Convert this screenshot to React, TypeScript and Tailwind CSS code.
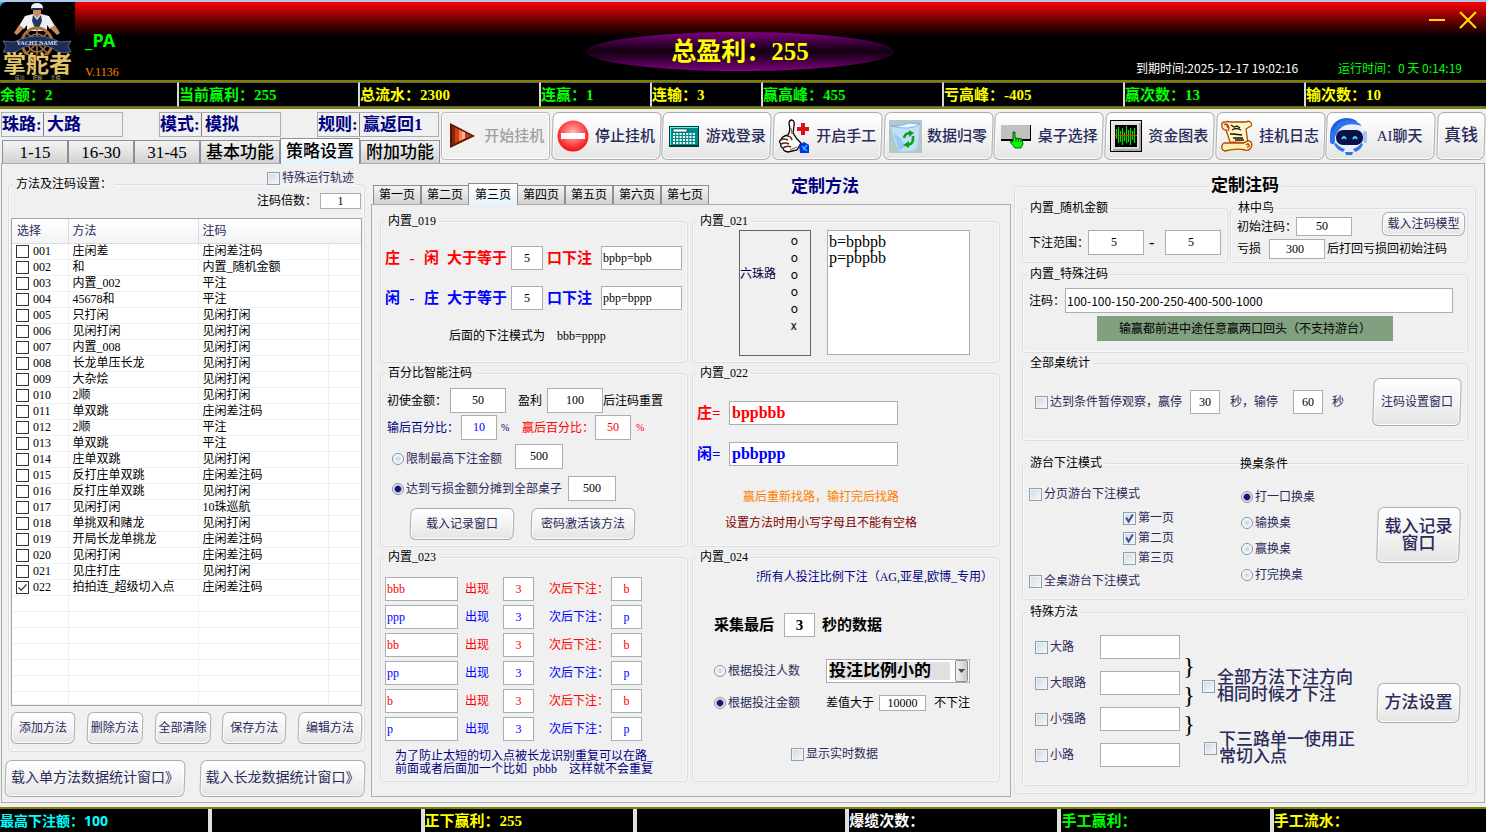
import type { ReactNode } from 'react'
import clsx from 'clsx'

type MethodRow = { id: string; method: string; stake: string; checked?: boolean }

const methods: MethodRow[] = [
  { id: '001', method: '庄闲差', stake: '庄闲差注码' },
  { id: '002', method: '和', stake: '内置_随机金额' },
  { id: '003', method: '内置_002', stake: '平注' },
  { id: '004', method: '45678和', stake: '平注' },
  { id: '005', method: '只打闲', stake: '见闲打闲' },
  { id: '006', method: '见闲打闲', stake: '见闲打闲' },
  { id: '007', method: '内置_008', stake: '见闲打闲' },
  { id: '008', method: '长龙单压长龙', stake: '见闲打闲' },
  { id: '009', method: '大杂烩', stake: '见闲打闲' },
  { id: '010', method: '2顺', stake: '见闲打闲' },
  { id: '011', method: '单双跳', stake: '庄闲差注码' },
  { id: '012', method: '2顺', stake: '平注' },
  { id: '013', method: '单双跳', stake: '平注' },
  { id: '014', method: '庄单双跳', stake: '见闲打闲' },
  { id: '015', method: '反打庄单双跳', stake: '庄闲差注码' },
  { id: '016', method: '反打庄单双跳', stake: '见闲打闲' },
  { id: '017', method: '见闲打闲', stake: '10珠巡航' },
  { id: '018', method: '单挑双和赌龙', stake: '见闲打闲' },
  { id: '019', method: '开局长龙单挑龙', stake: '庄闲差注码' },
  { id: '020', method: '见闲打闲', stake: '庄闲差注码' },
  { id: '021', method: '见庄打庄', stake: '见闲打闲' },
  { id: '022', method: '拍拍连_超级切入点', stake: '庄闲差注码', checked: true },
]

const stats = [
  { text: '余额：2', color: 'text-[#00ff00]' },
  { text: '当前赢利：255', color: 'text-[#00ff00]' },
  { text: '总流水：2300', color: 'text-[#ffff00]' },
  { text: '连赢：1', color: 'text-[#00ff00]' },
  { text: '连输：3', color: 'text-[#ffff00]' },
  { text: '赢高峰：455', color: 'text-[#00ff00]' },
  { text: '亏高峰：-405', color: 'text-[#ffff00]' },
  { text: '赢次数：13', color: 'text-[#00ff00]' },
  { text: '输次数：10', color: 'text-[#ffff00]' },
]

const footer = [
  { text: '最高下注额：100', color: "font-['Noto_Sans','Noto_Sans_CJK_SC',sans-serif] text-sm text-[#00ffff]" },
  { text: '', color: '' },
  { text: '正下赢利：255', color: 'text-[#ffff00]' },
  { text: '', color: '' },
  { text: '爆缆次数：', color: 'text-white' },
  { text: '手工赢利：', color: 'text-[#00ff00]' },
  { text: '手工流水：', color: 'text-[#ffff00]' },
]

const triggers = [
  { seq: 'bbb', next: 'b', color: 'text-[#ff0000]' },
  { seq: 'ppp', next: 'p', color: 'text-[#0000ff]' },
  { seq: 'bb', next: 'b', color: 'text-[#ff0000]' },
  { seq: 'pp', next: 'p', color: 'text-[#0000ff]' },
  { seq: 'b', next: 'b', color: 'text-[#ff0000]' },
  { seq: 'p', next: 'p', color: 'text-[#0000ff]' },
]

function Group({ title, className, children }: { title: string; className?: string; children: ReactNode }) {
  return (
    <fieldset className={clsx('relative min-w-0 rounded border border-[#d5dfe5] ring-1 ring-white/60 ring-inset', className)}>
      <legend className="ml-1 bg-[#f0f0f0] px-[3px] leading-[14px]">{title}</legend>
      {children}
    </fieldset>
  )
}

function Field({ value, label, className }: { value: string; label?: string; className?: string }) {
  return (
    <input
      defaultValue={value}
      aria-label={label}
      className={clsx('min-w-0 shrink-0 border border-[#abadb3] bg-white outline-none', className)}
    />
  )
}

function Check({ label, checked, className }: { label: ReactNode; checked?: boolean; className?: string }) {
  return (
    <label className={clsx('flex items-center gap-[2px] whitespace-nowrap text-[#2b2b5a]', className)}>
      <span className="relative block h-[13px] w-[13px] shrink-0">
        <input
          type="checkbox"
          defaultChecked={checked}
          className="peer block h-[13px] w-[13px] appearance-none border border-[#8e9fb0] bg-linear-to-br from-[#cfd9e2] to-[#f6f9fc] shadow-[inset_0_0_0_1px_#f0f4f7]"
        />
        <svg viewBox="0 0 13 13" className="pointer-events-none absolute inset-0 hidden peer-checked:block" fill="none" stroke="#3b4a96" strokeWidth="2">
          <path d="M3.2 5.5 5.6 9.6 9.8 2.6" />
        </svg>
      </span>
      <span>{label}</span>
    </label>
  )
}

function Radio({ label, name, checked, className }: { label: string; name: string; checked?: boolean; className?: string }) {
  return (
    <label className={clsx('flex items-center gap-[2px] whitespace-nowrap text-[#2b2b5a]', className)}>
      <input
        type="radio"
        name={name}
        defaultChecked={checked}
        className="h-3 w-3 shrink-0 appearance-none rounded-full border border-[#8e8f8f] bg-radial from-[#b8d8ee] to-white to-70% checked:from-[#14146e] checked:from-35% checked:to-[#eef3f8] checked:to-60%"
      />
      <span>{label}</span>
    </label>
  )
}

function Btn({ className, disabled, children }: { className?: string; disabled?: boolean; children: ReactNode }) {
  return (
    <button
      disabled={disabled}
      className={clsx(
        'relative isolate flex items-center justify-center whitespace-nowrap before:absolute before:inset-0 before:-z-10 before:border before:shadow-[inset_0_0_0_1px_#fff]',
        disabled
          ? 'text-[#a0a0a0] before:rounded-sm before:border-[#b8b8b8] before:bg-[#f0f0f0]'
          : 'text-[#2b2b5a] before:-skew-x-2 before:rounded-md before:border-[#acacac] before:bg-linear-to-b before:from-white before:via-[#f3f3f3] before:to-[#e4e4e4]',
        className,
      )}
    >
      {children}
    </button>
  )
}

function Logo() {
  return (
    <div className="flex h-[78px] w-[75px] shrink-0 flex-col items-center bg-black">
      <svg width="75" height="53" viewBox="0 0 75 53">
        <path d="M0 0h6Q1 1 0 5z" fill="#4aa6e0" />
        <path d="M31 5q1-4 6-4t6 4l-1 3H32z" fill="#f2f2f2" />
        <path d="M32 6h10v2H32z" fill="#1b2b55" />
        <path d="M33 8h8v4q-1 4-4 4t-4-4z" fill="#c98a5b" />
        <path d="M25 14l8-2 4 4 4-4 8 2 6 10-5 3-3-4v6H27v-6l-3 4-5-3z" fill="#eef0f4" />
        <path d="M33 13l4 5 4-5 1 6-3 7h-4l-3-7z" fill="#24375f" />
        <path d="M19 23l-5 8 3 2 7-7zM55 23l5 8-3 2-7-7z" fill="#c98a5b" />
        <g fill="none" stroke="#a8703a">
          <circle cx="37" cy="41" r="15" strokeWidth="3" />
          <circle cx="37" cy="41" r="9" strokeWidth="1.5" />
          <path d="M37 25v29M20 41h34M26 30l22 22M48 30 26 52" strokeWidth="1.6" />
        </g>
        <path d="M3 39l10 1q4-1 8-3 16-6 32 0 4 2 8 3l10-1-3 5 3 6-11 1-8-5q-15-7-30 0l-8 5-11-1 3-6z" fill="#1d2d57" stroke="#73809c" strokeWidth="0.7" />
        <text x="37" y="43" fontSize="6" fontWeight="bold" fill="#dfe4ee" textAnchor="middle">YACHT NAME</text>
      </svg>
      <div className="-mt-px text-[23px] leading-[21px] font-bold text-[#e3c56b]">掌舵者</div>
      <div className="flex gap-2 text-[5px] leading-[5px] text-[#b8b08a]"><span>成功</span><span>把握</span><span>幸福</span></div>
    </div>
  )
}

function PlayIcon() {
  return (
    <svg width="28" height="28" viewBox="0 0 28 28">
      <path d="M2 1v25L27 14z" fill="#5c1400" />
      <path d="M4 4v19l3-1V5z" fill="#7a2a10" />
      <path d="M7 5.500v16l4-2V7.500z" fill="#d2400f" />
      <path d="M11 7.500v12l3-1.500V9z" fill="#ff7a50" />
      <path d="M14 9v9l3-1.500V10.500z" fill="#ffb49a" />
      <path d="M17 10.500v6l7-2.500z" fill="#b24020" />
    </svg>
  )
}

function StopIcon() {
  return (
    <svg width="32" height="32" viewBox="0 0 32 32">
      <defs>
        <radialGradient id="stop" cx="0.5" cy="0.4" r="0.65">
          <stop offset="0" stopColor="#ffc0c0" />
          <stop offset="0.5" stopColor="#ff5a5a" />
          <stop offset="1" stopColor="#f00000" />
        </radialGradient>
      </defs>
      <circle cx="16" cy="16" r="15.500" fill="url(#stop)" />
      <rect x="4" y="13" width="24" height="6" fill="#fff" />
    </svg>
  )
}

function CalcIcon() {
  return (
    <svg width="32" height="32" viewBox="0 0 32 32">
      <path d="M1 6h30v21H1z" fill="#003838" />
      <path d="M2 7h28v18H2z" fill="#008a8a" />
      <path d="M2 7h28v1H3v17H2z" fill="#4ff" />
      <path d="M5 9h14v3H5z" fill="#e8ffff" stroke="#003838" strokeWidth="0.6" />
      {[14, 17, 20, 23].map((y) => (
        <path key={y} d={`M5 ${y}h22`} stroke="#fff" strokeWidth="2" strokeDasharray="2 1.300" />
      ))}
    </svg>
  )
}

function ThumbIcon() {
  return (
    <svg width="34" height="34" viewBox="0 0 34 34">
      <path d="M11 16q3-5 1-11 0-4 3-4 3 1 2 6l-1 7 4 6 4 4-4 7-9 2q-5-1-5-4-3-1-2-4-3-3 0-4 1-4 7-5z" fill="#fff" stroke="#000" strokeWidth="1.300" />
      <path d="M3 21q4-2 8 0M4 25q4-2 8 0M6 29q4-3 8-1M10 17q4 0 5 4" fill="none" stroke="#5c2a08" strokeWidth="1.600" />
      <path d="M13 31l7-3M14 9l1 6" stroke="#a86a3a" strokeWidth="1.200" />
      <path d="M22 26l5-3 5 3v8h-9z" fill="#0030e0" />
      <path d="M25 27l5 5M30 26l-4 5" stroke="#20c8ff" strokeWidth="1.400" />
      <path d="M24 4h4v4h4v4h-4v4h-4v-4h-4V8h4z" fill="#e01010" />
    </svg>
  )
}

function RecycleIcon() {
  return (
    <svg width="33" height="33" viewBox="0 0 33 33">
      <rect width="33" height="33" fill="#b4c8c8" />
      <path d="M2 6q8 1 18-3l11 1-3 24q-7 5-18 3-4-6-8-25z" fill="#bfe0fa" />
      <path d="M2 6q8 1 18-3l11 1q-10 7-29 2z" fill="#eaf6ff" stroke="#5fa9e6" strokeWidth="0.800" />
      <path d="M5 14q9 4 11 13l-6 3z" fill="#6db4ee" opacity="0.500" />
      <g fill="none" stroke="#12a012" strokeWidth="2.600">
        <path d="M15 18q1-5 6-5M24 16q1 8-5 9" />
      </g>
      <path d="M20 10l5 3-5 4zM20 21v7l-6-3z" fill="#12a012" />
    </svg>
  )
}

function TableIcon() {
  return (
    <svg width="32" height="32" viewBox="0 0 32 32">
      <path d="M1 5h30v15H1z" fill="#c0c0c0" />
      <path d="M1 19h29V5h1v16H1z" fill="#000" />
      <path d="M13 12h2v6l7 1 1 5-2 4h-6l-5-6 1-1 2 1z" fill="#00ff00" stroke="#003000" strokeWidth="0.800" />
      <path d="M16 18v4M18.500 18.500v3.500M21 19v3" stroke="#003000" strokeWidth="0.700" />
    </svg>
  )
}

function ChartIcon() {
  return (
    <svg width="32" height="32" viewBox="0 0 32 32">
      <path d="M0 0h32v32H0z" fill="#000" />
      <path d="M1 1h30v30H1z" fill="#e8e8e8" />
      <path d="M3 3h28v28H3z" fill="#a8a8a8" />
      <path d="M3 3h26v26H3z" fill="#dcdcdc" />
      <path d="M5 5h22v22H5z" fill="#000" />
      <path
        d="M6.500 9v10M8.500 7v16M10.500 11v11M12.500 8v17M14.500 12v9M16.500 6v17M18.500 10v12M20.500 8v17M22.500 11v9M24.500 8v15"
        stroke="#00e000"
        strokeWidth="1.200"
      />
      <path d="M5 15.500h22" stroke="#ff2020" strokeWidth="1" />
    </svg>
  )
}

function ScrollIcon() {
  return (
    <svg width="32" height="32" viewBox="0 0 32 32" strokeWidth="1.300" stroke="#b04a00">
      <path d="M4 2q-4 0-3 4 0 4 4 4l4 12 18 1-2-14 3-2q4-1 2-4-2-3-5-1H9Q7 1 4 2z" fill="#fff6c8" />
      <path d="M3 23h20q4-4 7-1 2 4-1 7-2 2-5 1-8-2-20 1-4-1-3-5 0-2 2-3z" fill="#fff0b0" />
      <path d="M25 25q2-2 3 0t-2 2M5 6q2 0 2 2" fill="none" />
      <path d="M3 5q4-3 5 3l-1 3" fill="none" stroke="#e02020" />
      <path d="M10 5l3 2 3-1 3 2M11 10q4-3 9 0M9 14h5M12 14l9 1M12 18h10M14 20h9" fill="none" stroke="#201000" />
    </svg>
  )
}

function RobotIcon() {
  return (
    <svg width="38" height="38" viewBox="0 0 38 38">
      <path d="M1 22Q0 6 12 2q8-3 16 2l-3 4Q12 4 7 14L5 27z" fill="#1f5fe0" />
      <ellipse cx="20" cy="20" rx="16" ry="15" fill="#e6effa" />
      <path d="M4 18Q5 5 19 3q9 0 14 6-9-3-16-1T6 20z" fill="#2f74ee" />
      <rect x="1" y="15" width="5" height="12" rx="2.500" fill="#2f74ee" />
      <rect x="34" y="14" width="4" height="12" rx="2" fill="#9fc6f6" />
      <rect x="7" y="13" width="27" height="15" rx="7" fill="#0b1048" />
      <path d="M13 22q2-4 4 0M24 22q2-4 4 0" fill="none" stroke="#3fd8ff" strokeWidth="1.800" />
      <path d="M5 27q3 6 9 8l2-3q-6-2-9-6zM34 27q-2 6-8 8l-2-3q6-2 8-6z" fill="#2f74ee" />
      <path d="M16 35h8l-1 3h-6z" fill="#2f74ee" />
    </svg>
  )
}

const tools: { label: string; icon?: ReactNode; disabled?: boolean }[] = [
  { label: '开始挂机', icon: <PlayIcon />, disabled: true },
  { label: '停止挂机', icon: <StopIcon /> },
  { label: '游戏登录', icon: <CalcIcon /> },
  { label: '开启手工', icon: <ThumbIcon /> },
  { label: '数据归零', icon: <RecycleIcon /> },
  { label: '桌子选择', icon: <TableIcon /> },
  { label: '资金图表', icon: <ChartIcon /> },
  { label: '挂机日志', icon: <ScrollIcon /> },
  { label: 'AI聊天', icon: <RobotIcon /> },
]

function TitleBar() {
  return (
    <header className="relative flex h-[78px] bg-linear-to-b from-[#ff0000] to-black to-50% text-[#00ff00]">
      <Logo />
      <div className="flex flex-col pl-[10px]">
        <div className="mt-7 font-['Noto_Sans','Noto_Sans_CJK_SC',sans-serif] text-lg leading-5 font-bold">_PA</div>
        <div className="mt-[14px] text-[#ff8000]">V.1136</div>
      </div>
      <div className="absolute top-[30px] left-1/2 flex h-[39px] w-[308px] -translate-x-[157px] items-center justify-center rounded-[50%] bg-linear-to-b from-[#800080] via-[#100010] to-[#800080] text-[25px] font-bold text-[#ffff00]">
        总盈利：255
      </div>
      <div className="ml-auto flex flex-col items-end justify-between pr-4 pb-1">
        <div className="flex items-center gap-3 pt-2">
          <button aria-label="最小化" className="block">
            <svg width="18" height="20" viewBox="0 0 18 20" stroke="#ffe000" strokeWidth="2"><path d="M1 10h16" /></svg>
          </button>
          <button aria-label="关闭" className="-mr-2 block">
            <svg width="20" height="20" viewBox="0 0 20 20" stroke="#ffe000" strokeWidth="2"><path d="M2 2l16 16M18 2 2 18" /></svg>
          </button>
        </div>
        <div className="flex font-['Noto_Sans_CJK_SC',sans-serif] leading-4">
          <span className="w-[202px] text-white">到期时间:2025-12-17 19:02:16</span>
          <span className="w-[132px]">运行时间：0 天 0:14:19</span>
        </div>
      </div>
    </header>
  )
}

function InfoBox({ label, value }: { label: string; value: string }) {
  return (
    <div className="flex h-[25px] w-[122px] border border-[#a8aeb4] text-[17px] font-bold whitespace-nowrap text-[#000080]">
      <span className="flex w-[42px] items-center border-r border-[#808080]">{label}</span>
      <span className="flex items-center pl-[3px]">{value}</span>
    </div>
  )
}

function Toolbar() {
  const tabs = ['1-15', '16-30', '31-45', '基本功能', '策略设置', '附加功能']
  return (
    <div className="flex px-[1px] pt-[3px]">
      <div className="flex w-[440px] shrink-0 flex-col justify-between">
        <div className="flex justify-between pr-[2px]">
          <InfoBox label="珠路:" value="大路" />
          <InfoBox label="模式:" value="模拟" />
          <InfoBox label="规则:" value="赢返回1" />
        </div>
        <div role="tablist" className="flex h-[25px] items-end pl-px">
          {tabs.map((tab, i) => (
            <button
              key={tab}
              role="tab"
              aria-selected={i === 4}
              className={clsx(
                'relative border border-[#8c8e94] text-[17px] leading-[17px] font-medium text-black',
                i < 3 ? 'w-[66px]' : 'w-[80px]',
                i === 4 ? '-mb-px h-[26px] border-b-0 bg-linear-to-b from-white to-[#e4f3fc]' : 'h-[23px] border-b-0 bg-linear-to-b from-[#f4f4f4] to-[#d2d2d2]',
              )}
            >
              {tab}
            </button>
          ))}
        </div>
      </div>
      <div className="mb-[3px] flex flex-1 gap-[2px] text-[15px] font-medium">
        {tools.map((tool) => (
          <Btn key={tool.label} disabled={tool.disabled} className="h-12 flex-1">
            <span className="flex w-[38px] justify-center">{tool.icon}</span>
            <span className="w-[66px] text-center">{tool.label}</span>
          </Btn>
        ))}
        <Btn className="h-12 w-12 text-[17px]">真钱</Btn>
      </div>
    </div>
  )
}

function MethodList() {
  return (
    <section className="flex w-[360px] shrink-0 flex-col">
      <Group title="方法及注码设置：" className="mt-[13px] ml-[3px]">
        <Check label="特殊运行轨迹" className="absolute -top-[20px] right-2 bg-[#f0f0f0] pr-[2px] leading-[14px]" />
        <div className="px-[2px] pt-[2px] pb-[7px]">
          <label className="flex h-4 items-center justify-end gap-[3px] pr-px">
            注码倍数：
            <Field value="1" className="h-4 w-[41px] text-center" />
          </label>
          <div className="mt-[9px] border border-[#a0a4ab] bg-white">
            <table className="w-full table-fixed border-collapse">
              <thead>
                <tr className="h-6 bg-linear-to-b from-white to-[#f2f3f5] text-left text-[#2b2b5a]">
                  <th className="w-14 border-r border-b border-[#dcdcdc] p-0 pl-[5px] font-normal">选择</th>
                  <th className="w-[130px] border-r border-b border-[#dcdcdc] p-0 pl-1 font-normal">方法</th>
                  <th className="w-[130px] border-b border-[#dcdcdc] p-0 pl-1 font-normal">注码</th>
                  <th className="border-b border-[#dcdcdc] p-0" />
                </tr>
              </thead>
              <tbody>
                {methods.map((row) => (
                  <tr key={row.id} className="h-4">
                    <td className="border-r border-b border-[#f0f0f0] p-0 pl-1">
                      <label className="flex h-[15px] items-center gap-1">
                        <span className="relative block h-[13px] w-[13px]">
                          <input type="checkbox" defaultChecked={row.checked} className="peer block h-[13px] w-[13px] appearance-none border border-[#333] bg-white" />
                          <svg viewBox="0 0 13 13" className="pointer-events-none absolute inset-0 hidden peer-checked:block" fill="none" stroke="#333" strokeWidth="1.200">
                            <path d="M2.500 6.500 5.200 9.200 10.500 3.500" />
                          </svg>
                        </span>
                        {row.id}
                      </label>
                    </td>
                    <td className="overflow-hidden border-r border-b border-[#f0f0f0] p-0 pl-1 whitespace-nowrap"><div className="h-[15px] leading-[15px]">{row.method}</div></td>
                    <td className="border-r border-b border-[#f0f0f0] p-0 pl-1"><div className="h-[15px] leading-[15px]">{row.stake}</div></td>
                    <td className="border-b border-[#f0f0f0] p-0" />
                  </tr>
                ))}
                {[1, 2, 3, 4, 5, 6, 7].map((n) => (
                  <tr key={n} className="h-4 last:h-[13px]">
                    <td className="border-r border-b border-[#f0f0f0] p-0" />
                    <td className="border-r border-b border-[#f0f0f0] p-0" />
                    <td className="border-r border-b border-[#f0f0f0] p-0" />
                    <td className="border-b border-[#f0f0f0] p-0" />
                  </tr>
                ))}
              </tbody>
            </table>
          </div>
          <div className="mt-[6px] flex justify-between">
            <Btn className="h-8 w-16">添加方法</Btn>
            <Btn className="h-8 w-14">删除方法</Btn>
            <Btn className="h-8 w-14">全部清除</Btn>
            <Btn className="h-8 w-16">保存方法</Btn>
            <Btn className="h-8 w-16">编辑方法</Btn>
          </div>
        </div>
      </Group>
      <div className="mt-2 flex justify-between text-sm">
        <Btn className="h-[37px] w-[180px]">载入单方法数据统计窗口》</Btn>
        <Btn className="h-[37px] w-[165px]">载入长龙数据统计窗口》</Btn>
      </div>
    </section>
  )
}

function DiffRow({ from, to, rule, className }: { from: string; to: string; rule: string; className: string }) {
  return (
    <div className={clsx('flex h-6 items-center text-[15px] font-bold', className)}>
      <label className="flex items-center">
        <span className="flex w-[126px] gap-2"><span>{from}</span><span className="w-2 text-center">-</span><span>{to}</span><span>大于等于</span></span>
        <Field value="5" className="h-6 w-8 text-center text-xs font-normal text-black" />
      </label>
      <label className="ml-1 flex items-center gap-[9px]">
        <span>口下注</span>
        <Field value={rule} className="h-6 w-[81px] pl-px text-xs font-normal text-black" />
      </label>
    </div>
  )
}

function MethodPages() {
  const pages = ['第一页', '第二页', '第三页', '第四页', '第五页', '第六页', '第七页']
  return (
    <section className="flex min-w-0 flex-1 flex-col pt-[14px] pb-[5px]">
      <div className="flex h-[26px] items-end pl-[2px]">
        <div role="tablist" className="flex items-end">
          {pages.map((page, i) => (
            <button
              key={page}
              role="tab"
              aria-selected={i === 2}
              className={clsx(
                'relative border border-b-0 border-[#8c8e94]',
                i === 2 ? '-mx-px -mb-px h-[22px] w-[50px] bg-linear-to-b from-white to-[#e4f3fc]' : 'h-[19px] w-12 bg-linear-to-b from-[#f4f4f4] to-[#d2d2d2]',
              )}
            >
              {page}
            </button>
          ))}
        </div>
        <h2 className="ml-[82px] self-start text-[17px] leading-[18px] font-bold text-[#000080]">定制方法</h2>
      </div>
      <div className="grid flex-1 auto-rows-min grid-cols-2 gap-x-1 gap-y-[3px] border border-[#acacac] pt-[9px] pr-[10px] pb-[13px] pl-2">
        <Group title="内置_019" className="min-h-[149px]">
          <div className="flex flex-col pt-[18px] pl-1">
            <DiffRow from="庄" to="闲" rule="bpbp=bpb" className="text-[#ff0000]" />
            <DiffRow from="闲" to="庄" rule="pbp=bppp" className="mt-4 text-[#0000ff]" />
            <div className="mt-[18px] flex gap-3 pl-16 leading-4"><span>后面的下注模式为</span><span>bbb=pppp</span></div>
          </div>
        </Group>
        <Group title="内置_021" className="min-h-[149px]">
          <div className="flex gap-4 pt-[2px] pl-[46px]">
            <div className="flex h-[126px] w-[72px] justify-between border border-[#646464] pr-3 font-['Noto_Sans_CJK_SC',sans-serif]">
              <span className="pt-[34px] leading-4 whitespace-nowrap text-[#000040]">六珠路</span>
              <span className="flex flex-col leading-[17px]">
                <span>o</span><span>o</span><span>o</span><span>o</span><span>o</span><span>x</span>
              </span>
            </div>
            <textarea aria-label="内置_021" defaultValue={'b=bpbpb\np=pbpbb'} className="h-[125px] w-[143px] resize-none border border-[#abadb3] bg-white px-px pt-[3px] text-base leading-4 outline-none" />
          </div>
        </Group>

        <Group title="百分比智能注码" className="min-h-[181px]">
          <div className="flex flex-col pt-2 pl-[6px]">
            <div className="flex items-center">
              <label className="flex items-center"><span className="w-[63px]">初使金额：</span><Field value="50" className="h-[25px] w-14 text-center" /></label>
              <label className="ml-3 flex items-center"><span className="w-[29px]">盈利</span><Field value="100" className="h-[25px] w-14 text-center" /></label>
              <span>后注码重置</span>
            </div>
            <div className="mt-[2px] flex items-center text-[#000080]">
              <label className="flex items-center"><span className="w-[74px]">输后百分比：</span><Field value="10" className="h-[25px] w-9 text-center text-[#0000ff]" /></label>
              <span className="ml-1 w-[21px] text-[10px]">%</span>
              <label className="flex items-center text-[#ff0000]"><span className="w-[73px]">赢后百分比：</span><Field value="50" className="h-[25px] w-9 text-center" /></label>
              <span className="ml-[5px] text-[10px] text-[#ff0000]">%</span>
            </div>
            <div className="mt-1 flex items-center pl-[5px]">
              <Radio name="limit" label="限制最高下注金额" className="w-[123px] pt-[5px]" />
              <Field label="限制最高下注金额" value="500" className="h-[25px] w-12 text-center" />
            </div>
            <div className="mt-[7px] flex items-center pl-[5px]">
              <Radio name="limit" label="达到亏损金额分摊到全部桌子" checked className="w-[176px]" />
              <Field label="达到亏损金额" value="500" className="h-[25px] w-12 text-center" />
            </div>
            <div className="mt-[7px] flex gap-[17px] pl-[23px]">
              <Btn className="h-8 w-[104px]">载入记录窗口</Btn>
              <Btn className="h-8 w-[104px]">密码激活该方法</Btn>
            </div>
          </div>
        </Group>
        <Group title="内置_022" className="min-h-[181px]">
          <div className="flex flex-col pt-[21px] pl-1 font-bold">
            <label className="flex items-center text-[15px] text-[#ff0000]"><span className="w-8">庄=</span><Field value="bppbbb" className="h-6 w-[169px] pl-[2px] text-base" /></label>
            <label className="mt-[17px] flex items-center text-[15px] text-[#0000ff]"><span className="w-8">闲=</span><Field value="pbbppp" className="h-6 w-[169px] pl-[2px] text-base" /></label>
            <p className="mt-[23px] pl-[46px] leading-4 font-normal text-[#ff8000]">赢后重新找路，输打完后找路</p>
            <p className="mt-[10px] pl-7 leading-4 font-normal text-[#800000]">设置方法时用小写字母且不能有空格</p>
          </div>
        </Group>

        <Group title="内置_023" className="min-h-[232px]">
          <div className="flex flex-col gap-1 pt-[13px] pl-1">
            {triggers.map((t, i) => (
              <div key={i} className={clsx('flex items-center', t.color)}>
                <Field label={`内置_023 第${i + 1}行`} value={t.seq} className="h-6 w-[73px] pl-px" />
                <label className="ml-[7px] flex items-center"><span className="w-[38px]">出现</span><Field value="3" className="h-6 w-[31px] text-center" /></label>
                <label className="ml-[15px] flex items-center"><span className="w-[62px]">次后下注：</span><Field value={t.next} className="h-6 w-[31px] text-center" /></label>
              </div>
            ))}
          </div>
          <p className="mt-[9px] pl-[14px] leading-[13px] whitespace-nowrap text-[#000080]">
            为了防止太短的切入点被长龙识别重复可以在路_<br />
            前面或者后面加一个比如<span className="px-[6px]">pbbb</span>&nbsp;&nbsp;这样就不会重复
          </p>
        </Group>
        <Group title="内置_024" className="min-h-[232px]">
          <div className="flex flex-col pt-[6px] pl-[21px]">
            <div className="ml-[43px] flex w-[236px] justify-end overflow-hidden leading-[14px] whitespace-nowrap text-[#000080]">按所有人投注比例下注（AG,亚星,欧博_专用）</div>
            <label className="mt-[29px] flex items-center text-[15px] font-bold">
              <span className="w-[70px]">采集最后</span>
              <Field value="3" className="h-6 w-[31px] text-center" />
              <span className="ml-[7px]">秒的数据</span>
            </label>
            <div className="mt-[22px] flex items-center">
              <Radio name="basis" label="根据投注人数" className="w-[112px]" />
              <div className="relative flex h-6 w-[144px] border border-[#abadb3] bg-white p-[2px]">
                <select aria-label="投注比例" className="w-[121px] appearance-none bg-[#e0e0e0] text-[17px] leading-[18px] font-bold outline-none">
                  <option>投注比例小的</option>
                </select>
                <span className="pointer-events-none absolute inset-y-0 right-px flex w-[13px] items-center justify-center rounded-xs border border-[#8c8e94] bg-linear-to-r from-[#f4f4f4] to-[#c8c8c8]">
                  <svg width="7" height="4" viewBox="0 0 7 4"><path d="M0 0h7L3.500 4z" fill="#444" /></svg>
                </span>
              </div>
            </div>
            <div className="mt-3 flex items-center">
              <Radio name="basis" label="根据投注金额" checked className="w-[112px]" />
              <label className="flex items-center"><span className="w-[53px]">差值大于</span><Field value="10000" className="h-4 w-[47px] text-center" /></label>
              <span className="ml-2">不下注</span>
            </div>
            <Check label="显示实时数据" className="mt-9 ml-[77px] leading-[14px]" />
          </div>
        </Group>
      </div>
    </section>
  )
}

function StakePanel() {
  return (
    <section className="w-[462px] shrink-0 pt-[13px]">
      <fieldset className="min-w-0 rounded border border-[#d5dfe5] ring-1 ring-white/60 ring-inset">
        <legend className="mx-auto bg-[#f0f0f0] px-[2px] text-[17px] leading-[18px] font-bold">定制注码</legend>
        <div className="flex flex-col px-[7px] pt-[6px] pb-[7px]">
          <div className="flex gap-[2px] whitespace-nowrap">
            <Group title="内置_随机金额" className="h-[62px] w-[206px]">
              <div className="flex items-center pt-[15px] pl-[6px]">
                <label className="flex shrink-0 items-center"><span className="w-[59px]">下注范围：</span><Field value="5" className="h-[25px] w-14 pr-1 text-center" /></label>
                <span className="w-[21px] shrink-0 pl-[5px] text-base">-</span>
                <Field label="下注范围上限" value="5" className="h-[25px] w-14 pr-1 text-center" />
              </div>
            </Group>
            <Group title="林中鸟" className="h-[62px] flex-1">
              <div className="pt-[2px] pl-[6px]">
                <div className="flex h-[19px] items-center">
                  <label className="flex shrink-0 items-center"><span className="w-[59px]">初始注码：</span><Field value="50" className="h-[19px] w-14 pr-1 text-center" /></label>
                  <Btn className="mr-[2px] ml-auto h-6 w-[83px] self-end">载入注码模型</Btn>
                </div>
                <div className="mt-[3px] flex items-center">
                  <label className="flex items-center"><span className="w-8">亏损</span><Field value="300" className="h-5 w-14 pr-1 text-center" /></label>
                  <span className="pl-[2px]">后打回亏损回初始注码</span>
                </div>
              </div>
            </Group>
          </div>
          <Group title="内置_特殊注码" className="mt-1 h-[86px]">
            <label className="flex items-center pt-[7px] pr-[14px] pl-[6px]">
              <span className="w-9 whitespace-nowrap">注码：</span>
              <Field value="100-100-150-200-250-400-500-1000" className="h-[25px] flex-1 pl-px font-['Noto_Sans_CJK_SC',sans-serif]" />
            </label>
            <div className="mx-[74px] mt-[3px] flex h-[25px] items-center justify-center bg-[#80a080]">输赢都前进中途任意赢两口回头（不支持游台）</div>
          </Group>
          <Group title="全部桌统计" className="mt-[3px] h-[85px]">
            <div className="flex items-center pt-2 pr-[6px] pl-3 text-[#2b2b5a]">
              <Check label="达到条件暂停观察，赢停" className="w-[155px]" />
              <Field label="赢停" value="30" className="h-6 w-[30px] text-center text-black" />
              <label className="flex items-center"><span className="w-[73px] pl-[10px]">秒，输停</span><Field value="60" className="h-6 w-[30px] text-center text-black" /></label>
              <span className="pl-[9px]">秒</span>
              <Btn className="ml-auto h-12 w-[88px]">注码设置窗口</Btn>
            </div>
          </Group>
          <Group title="游台下注模式" className="mt-[15px] h-[144px]">
            <span className="absolute -top-[13px] left-[217px] leading-[14px]">换桌条件</span>
            <div className="flex pr-[7px]">
              <div className="flex w-[212px] flex-col pt-[18px] pl-[6px] leading-[13px]">
                <Check label="分页游台下注模式" />
                <div className="mt-[11px] flex flex-col gap-[7px] pl-[94px]">
                  <Check label="第一页" checked />
                  <Check label="第二页" checked />
                  <Check label="第三页" />
                </div>
                <Check label="全桌游台下注模式" className="mt-[10px]" />
              </div>
              <div className="flex flex-col gap-3 pt-5 pl-[6px] leading-[14px]">
                <Radio name="switch" label="打一口换桌" checked />
                <Radio name="switch" label="输换桌" />
                <Radio name="switch" label="赢换桌" />
                <Radio name="switch" label="打完换桌" />
              </div>
              <Btn className="mt-[37px] ml-auto h-14 w-[83px] text-[17px] leading-[17px] font-medium">载入记录<br />窗口</Btn>
            </div>
          </Group>
          <Group title="特殊方法" className="mt-[5px] h-[181px]">
            <div className="flex pr-[7px] pt-4">
              <div className="flex flex-col gap-3 pl-3">
                {['大路', '大眼路', '小强路', '小路'].map((road) => (
                  <div key={road} className="flex items-center">
                    <Check label={road} className="w-[65px]" />
                    <Field label={road} value="" className="h-6 w-20" />
                  </div>
                ))}
              </div>
              <div className="flex w-[22px] flex-col items-center pt-[17px] pr-1 text-2xl leading-[29px]">
                <span>{'}'}</span><span>{'}'}</span><span>{'}'}</span>
              </div>
              <div className="flex flex-col gap-7 pt-[34px] text-[17px] leading-[17px] font-medium">
                <Check label={<>全部方法下注方向<br />相同时候才下注</>} />
                <Check label={<>下三路单一使用正<br />常切入点</>} className="pl-[2px]" />
              </div>
              <Btn className="mt-12 ml-auto h-10 w-[83px] text-[17px] font-medium">方法设置</Btn>
            </div>
          </Group>
        </div>
      </fieldset>
    </section>
  )
}

export default function App() {
  return (
    <div className="flex min-h-screen flex-col bg-[#f0f0f0] font-['Liberation_Serif','Noto_Sans_CJK_SC',serif] text-xs leading-4 text-black">
      <div className="h-[2px] bg-[#a8c8ec]" />
      <TitleBar />
      <div className="grid h-[29px] grid-cols-[179fr_181fr_181fr_111fr_111fr_181fr_181fr_181fr_180fr] border-y-2 border-[#808000] bg-black text-[15px] font-bold">
        {stats.map((s) => (
          <div key={s.text} className={clsx('flex items-center overflow-hidden border-y border-r-2 border-y-[#606060] border-r-[#d8d8d8] whitespace-nowrap last:border-r-0', s.color)}>
            {s.text}
          </div>
        ))}
      </div>
      <Toolbar />
      <main className="mx-px flex flex-1 border border-[#acacac] pr-2 pl-[3px]">
        <MethodList />
        <div className="w-[6px] shrink-0" />
        <MethodPages />
        <div className="w-[3px] shrink-0" />
        <StakePanel />
      </main>
      <footer className="mt-1 grid h-[25px] grid-cols-7 border-t-2 border-[#808000] bg-black text-[15px] font-bold">
        {footer.map((f, i) => (
          <div key={i} className={clsx('flex items-center border-r-4 border-[#e0e0e0] whitespace-nowrap last:border-r-0', f.color)}>
            {f.text}
          </div>
        ))}
      </footer>
    </div>
  )
}
